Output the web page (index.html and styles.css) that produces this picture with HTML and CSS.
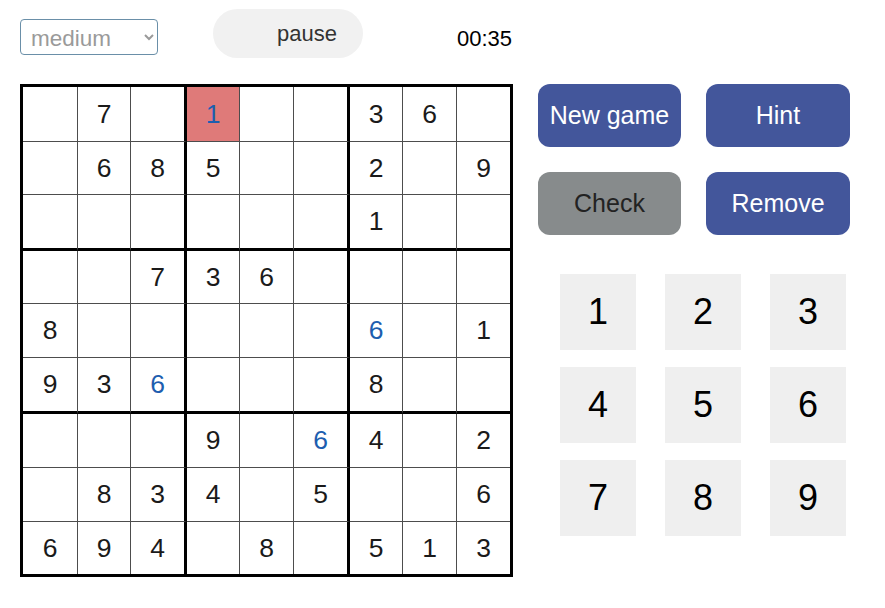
FILE: index.html
```html
<!DOCTYPE html>
<html>
<head>
<meta charset="utf-8">
<link rel="stylesheet" href="styles.css">
</head>
<body>
<div class="app">
  <div class="topbar">
    <select class="level">
      <option>easy</option>
      <option selected>medium</option>
      <option>hard</option>
    </select>
    <button class="pause">pause</button>
    <div class="timer">00:35</div>
  </div>
  <div class="main">
    <div class="board">
      <div class="cell"></div><div class="cell">7</div><div class="cell"></div><div class="cell user selected">1</div><div class="cell"></div><div class="cell"></div><div class="cell">3</div><div class="cell">6</div><div class="cell"></div>
      <div class="cell"></div><div class="cell">6</div><div class="cell">8</div><div class="cell">5</div><div class="cell"></div><div class="cell"></div><div class="cell">2</div><div class="cell"></div><div class="cell">9</div>
      <div class="cell"></div><div class="cell"></div><div class="cell"></div><div class="cell"></div><div class="cell"></div><div class="cell"></div><div class="cell">1</div><div class="cell"></div><div class="cell"></div>
      <div class="cell"></div><div class="cell"></div><div class="cell">7</div><div class="cell">3</div><div class="cell">6</div><div class="cell"></div><div class="cell"></div><div class="cell"></div><div class="cell"></div>
      <div class="cell">8</div><div class="cell"></div><div class="cell"></div><div class="cell"></div><div class="cell"></div><div class="cell"></div><div class="cell user">6</div><div class="cell"></div><div class="cell">1</div>
      <div class="cell">9</div><div class="cell">3</div><div class="cell user">6</div><div class="cell"></div><div class="cell"></div><div class="cell"></div><div class="cell">8</div><div class="cell"></div><div class="cell"></div>
      <div class="cell"></div><div class="cell"></div><div class="cell"></div><div class="cell">9</div><div class="cell"></div><div class="cell user">6</div><div class="cell">4</div><div class="cell"></div><div class="cell">2</div>
      <div class="cell"></div><div class="cell">8</div><div class="cell">3</div><div class="cell">4</div><div class="cell"></div><div class="cell">5</div><div class="cell"></div><div class="cell"></div><div class="cell">6</div>
      <div class="cell">6</div><div class="cell">9</div><div class="cell">4</div><div class="cell"></div><div class="cell">8</div><div class="cell"></div><div class="cell">5</div><div class="cell">1</div><div class="cell">3</div>
    </div>
    <div class="panel">
      <div class="actions">
        <button class="btn primary">New game</button>
        <button class="btn primary">Hint</button>
        <button class="btn muted">Check</button>
        <button class="btn primary">Remove</button>
      </div>
      <div class="numpad">
        <button class="key">1</button><button class="key">2</button><button class="key">3</button>
        <button class="key">4</button><button class="key">5</button><button class="key">6</button>
        <button class="key">7</button><button class="key">8</button><button class="key">9</button>
      </div>
    </div>
  </div>
</div>
</body>
</html>
```

FILE: styles.css
```css
* { box-sizing: border-box; }
body {
  margin: 0;
  background: #fff;
  font-family: "Liberation Sans", Arial, sans-serif;
  color: #111;
}
.app {
  padding: 9px 0 0 20px;
}
.topbar {
  display: flex;
  align-items: flex-start;
  height: 49px;
}
.level {
  margin-top: 10px;
  width: 138px;
  height: 36px;
  font-family: "Liberation Sans", Arial, sans-serif;
  font-size: 22.5px;
  color: #9a9a9a;
  background: #fff;
  border: 1px solid #6a8fa8;
  border-radius: 4px;
  padding: 3px 6px 0;
}
.pause {
  margin-left: 55px;
  width: 150px;
  height: 49px;
  border: none;
  border-radius: 25px;
  background: #f1f1f1;
  color: #333;
  font-family: "Liberation Sans", Arial, sans-serif;
  font-size: 22px;
  line-height: 49px;
  padding: 0 0 0 38px;
  text-align: center;
}
.timer {
  margin-left: 94px;
  margin-top: 17px;
  font-size: 22px;
  color: #000;
}
.main {
  display: flex;
  align-items: flex-start;
  margin-top: 26px;
}
.board {
  display: grid;
  grid-template-columns: 55px 53px 56px 53px 54px 56px 53px 54px 53px;
  grid-template-rows: 55px 53px 56px 53px 54px 56px 54px 54px 52px;
  border: 3px solid #000;
  box-sizing: content-box;
}
.cell {
  display: flex;
  align-items: center;
  justify-content: center;
  border-right: 1px solid #4d4d4d;
  border-bottom: 1px solid #4d4d4d;
  font-size: 26.5px;
  color: #1a1a1a;
}
.cell:nth-child(9n+3),
.cell:nth-child(9n+6) {
  border-right: 3px solid #000;
}
.cell:nth-child(9n) {
  border-right: none;
}
.cell:nth-child(n+19):nth-child(-n+27),
.cell:nth-child(n+46):nth-child(-n+54) {
  border-bottom: 3px solid #000;
}
.cell:nth-child(n+73) {
  border-bottom: none;
}
.cell.user {
  color: #1d5eaf;
}
.cell.selected {
  background: #df7a79;
}
.panel {
  margin-left: 25px;
}
.actions {
  display: grid;
  grid-template-columns: 143px 144px;
  grid-auto-rows: 63px;
  gap: 25px;
}
.btn {
  border: none;
  border-radius: 12px;
  font-family: "Liberation Sans", Arial, sans-serif;
  font-size: 25px;
}
.btn.primary {
  background: #43569b;
  color: #fff;
}
.btn.muted {
  background: #878b8c;
  color: #222;
}
.numpad {
  display: grid;
  grid-template-columns: repeat(3, 76px);
  grid-auto-rows: 76px;
  column-gap: 29px;
  row-gap: 17px;
  margin: 39px 0 0 22px;
}
.key {
  border: none;
  background: #efefef;
  font-family: "Liberation Sans", Arial, sans-serif;
  font-size: 36px;
  color: #000;
  padding: 0;
}
```
